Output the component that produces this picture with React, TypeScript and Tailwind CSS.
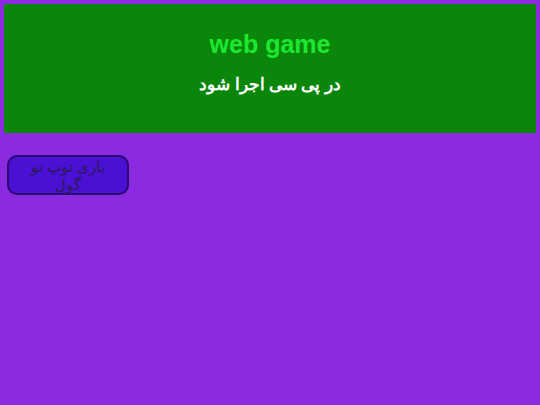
export default function App() {
  return (
    <div className="min-h-[405px] bg-[#8a2be2] p-1">
      <header className="flex h-[129px] flex-col items-center bg-[#0a870a] pt-[26px]">
        <h1 className="font-['Liberation_Sans',sans-serif] text-[25px] font-bold leading-[29px] text-[#1de82f]">
          web game
        </h1>
        <p
          dir="rtl"
          className="mt-[14px] font-['Noto_Sans',sans-serif] text-[17px] font-bold leading-[22px] text-white"
        >
          در پی سی اجرا شود
        </p>
      </header>
      <div className="mt-[22px] px-[3px]">
        <button
          dir="rtl"
          className="flex h-[40px] w-[122px] items-start justify-center rounded-[10px] border-2 border-[#2b0a6e] bg-[#4a10d4] px-3 font-['Noto_Sans',sans-serif] text-[15px] leading-[18px] text-[#2a1a55]"
        >
          بازی توپ تو گول
        </button>
      </div>
    </div>
  )
}
